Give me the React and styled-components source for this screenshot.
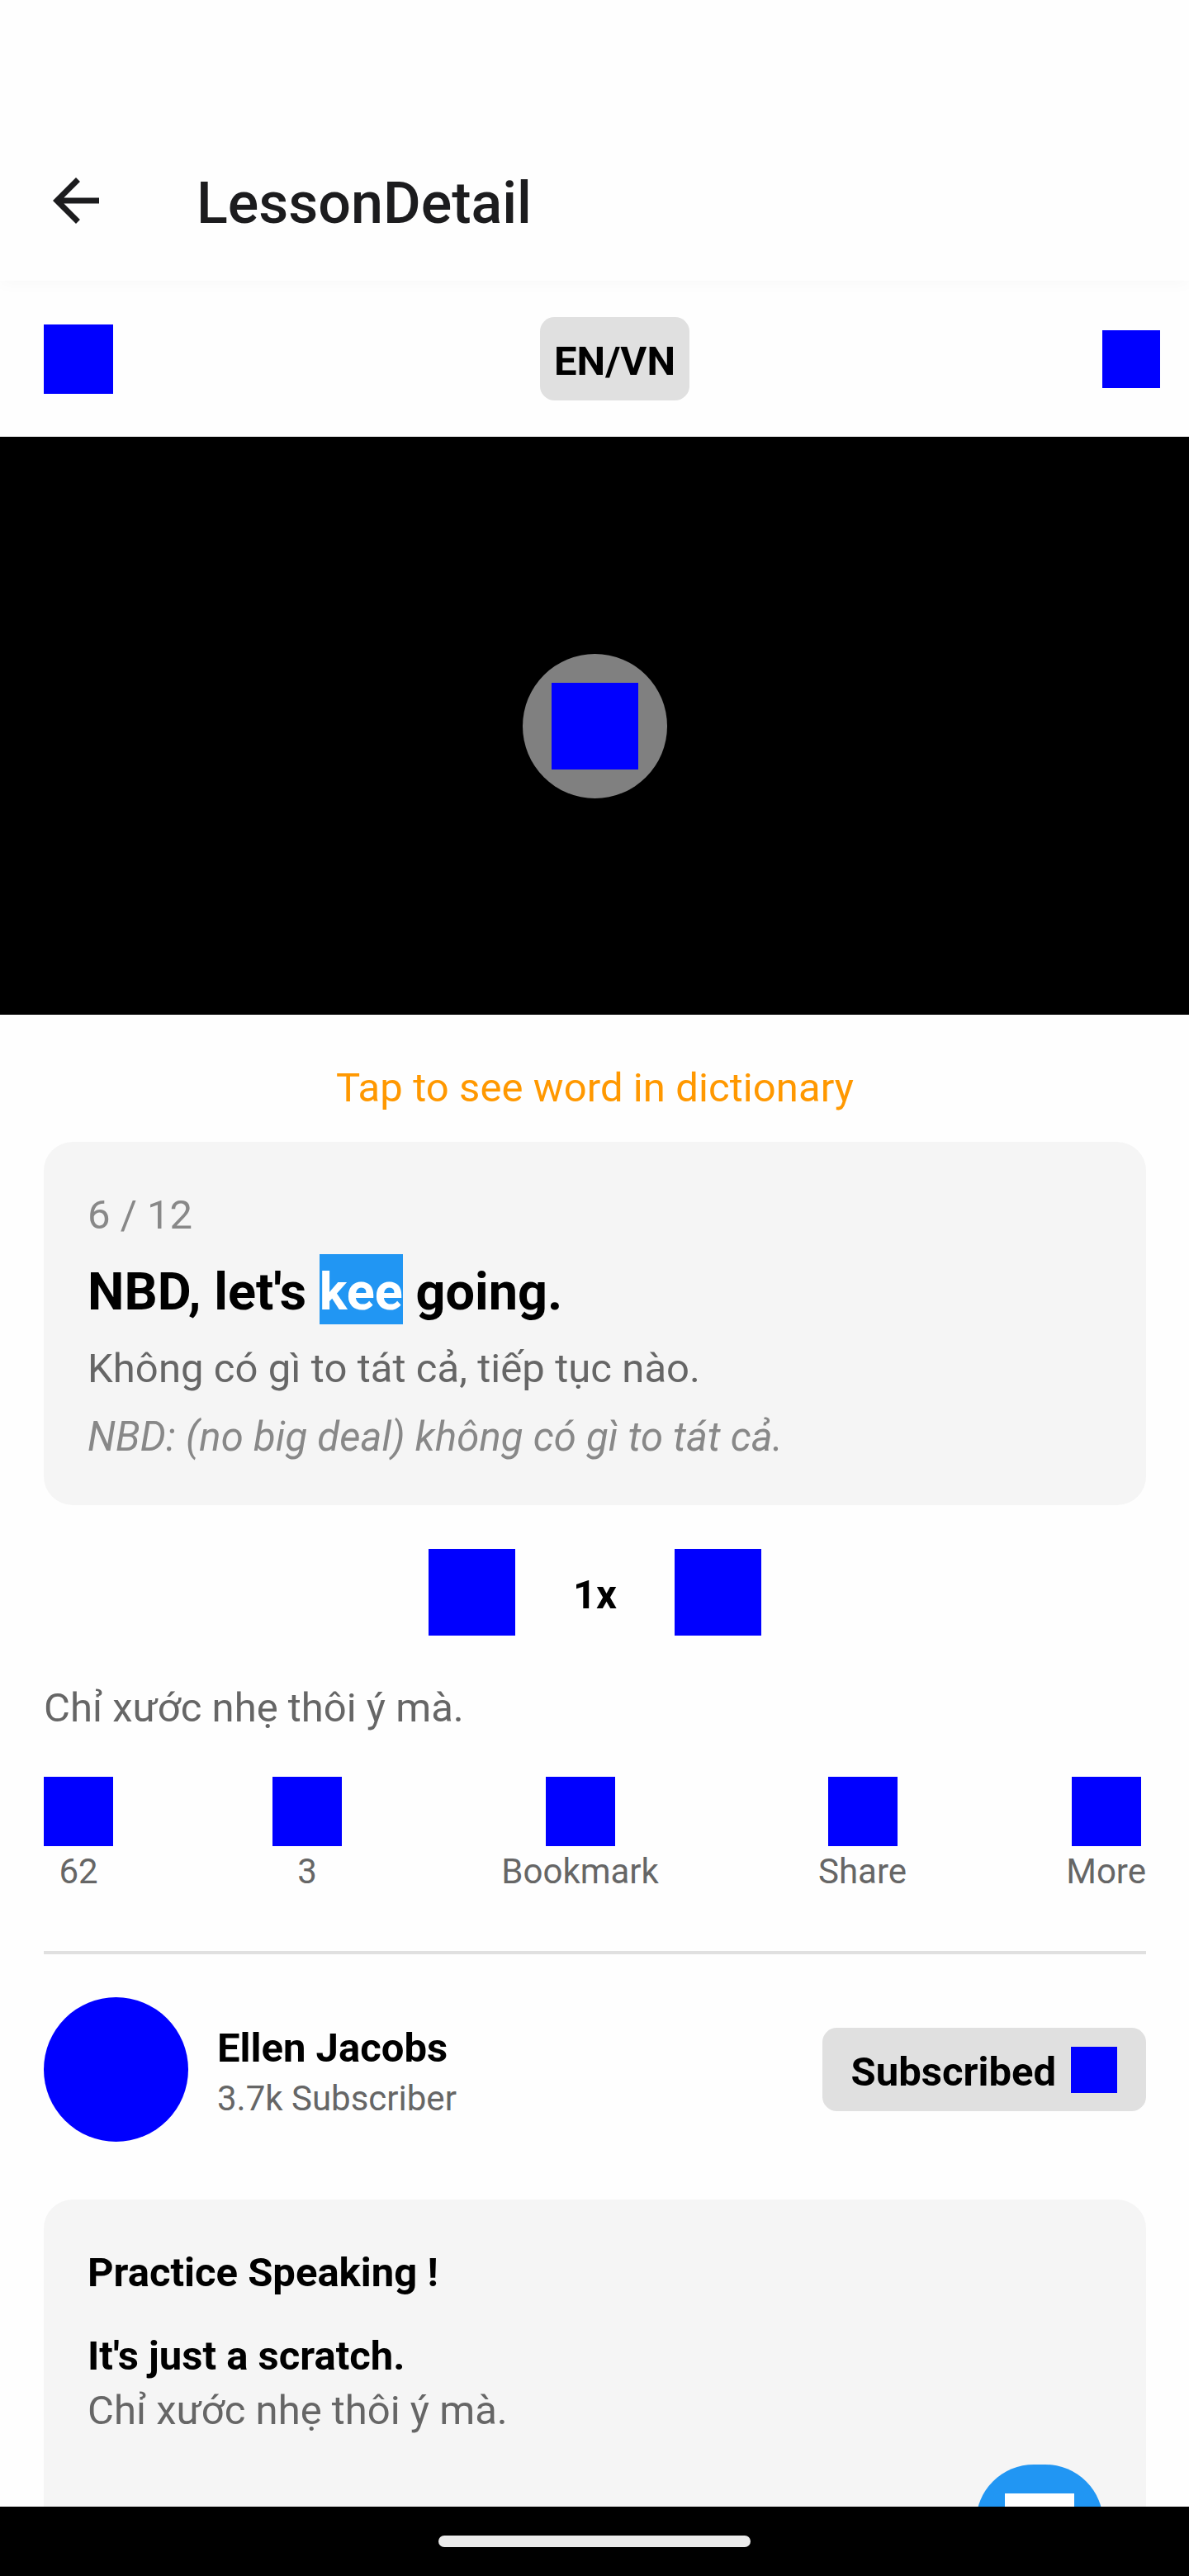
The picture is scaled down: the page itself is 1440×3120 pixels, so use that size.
import React from "react";
import styled, { createGlobalStyle } from "styled-components";

const GlobalStyle = createGlobalStyle`
  *, *::before, *::after { box-sizing: border-box; }
  html, body { margin: 0; padding: 0; }
  body {
    background: #fff;
    font-family: Roboto, "Noto Sans", sans-serif;
    color: #000;
  }
`;

const Screen = styled.div`
  width: 1440px;
  height: 3120px;
  display: flex;
  flex-direction: column;
  overflow: hidden;
  background: #fefefe;
`;

const Header = styled.header`
  flex: none;
  height: 340px;
  padding: 201px 50px 0;
  display: flex;
  align-items: flex-start;
  gap: 104px;
  background: #fefefe;
  box-shadow: 0 5px 18px rgba(0, 0, 0, 0.025);
`;

const BackIcon = styled.svg`
  width: 84px;
  height: 84px;
  fill: #1c1c1e;
`;

const Title = styled.h1`
  margin: 4px 0 0;
  font-size: 70px;
  line-height: 82px;
  font-weight: 500;
  color: #1c1c1e;
`;

const Body = styled.main`
  flex: 1;
  min-height: 0;
  display: flex;
  flex-direction: column;
`;

const Toolbar = styled.div`
  flex: none;
  height: 189px;
  padding: 0 35px 0 53px;
  display: flex;
  align-items: center;
  justify-content: space-between;
`;

const Block = styled.div`
  flex: none;
  width: ${(p) => p.$size}px;
  height: ${(p) => p.$size}px;
  background: ${(p) => p.$color || "#0000ff"};
`;

const ToolbarLead = styled(Block)`
  margin-right: 17px;
`;

const Pill = styled.button`
  height: 101px;
  padding: 5px ${(p) => p.$pad}px 0;
  display: flex;
  align-items: center;
  gap: 18px;
  border: 0;
  border-radius: 17.5px;
  background: #e0e0e0;
  color: #000;
  font: 700 49px/57px Roboto, "Noto Sans", sans-serif;
`;

const PillIcon = styled(Block)`
  margin-top: -4px;
`;

const Video = styled.div`
  flex: none;
  height: 700px;
  display: flex;
  align-items: center;
  justify-content: center;
  background: #000;
`;

const PlayButton = styled.div`
  width: 175px;
  height: 175px;
  border-radius: 50%;
  display: flex;
  align-items: center;
  justify-content: center;
  background: #808080;
`;

const Text = styled.p`
  margin: ${(p) => p.$top || 0}px 0 0;
  font-size: 49px;
  line-height: 57px;
  font-weight: ${(p) => (p.$bold ? 700 : 400)};
  font-style: ${(p) => (p.$italic ? "italic" : "normal")};
  letter-spacing: ${(p) => p.$track || 0}px;
  color: ${(p) => p.$color || "#000"};
`;

const Small = styled.span`
  font-size: 42px;
  line-height: 49px;
  color: #666;
`;

const Hint = styled(Text)`
  text-align: center;
  color: #ff9800;
`;

const Content = styled.div`
  flex: 1;
  min-height: 0;
  overflow: hidden;
  padding: 0 52px 0 53px;
  display: flex;
  flex-direction: column;
`;

const Card = styled.section`
  flex: none;
  margin-top: ${(p) => p.$top}px;
  padding: 60px 52px 54px 53px;
  display: flex;
  flex-direction: column;
  border-radius: 35px;
  background: #f5f5f5;
`;

const Phrase = styled.p`
  margin: 28px 0 0;
  font-size: 63px;
  line-height: 73px;
  font-weight: 700;
`;

const Highlight = styled.span`
  padding: 9px 0 3px;
  background: #2196f3;
  color: #fff;
`;

const SpeedRow = styled.div`
  flex: none;
  margin-top: 53px;
  display: flex;
  align-items: center;
  justify-content: center;
  gap: 70px;
`;

const Actions = styled.div`
  flex: none;
  margin-top: 55px;
  display: flex;
  justify-content: space-between;
`;

const Action = styled.div`
  display: flex;
  flex-direction: column;
  align-items: center;
  gap: 6px;
`;

const Divider = styled.hr`
  flex: none;
  width: 100%;
  height: 4px;
  margin: 72px 0 52px;
  border: 0;
  background: #e0e0e0;
`;

const Channel = styled.div`
  flex: none;
  display: flex;
  align-items: flex-start;
`;

const Avatar = styled(Block)`
  border-radius: 50%;
`;

const ChannelInfo = styled.div`
  flex: 1;
  padding: 33px 0 0 35px;
  display: flex;
  flex-direction: column;
  gap: 8px;
`;

const SubscribeSlot = styled.div`
  margin-top: 37px;
`;

const MicButton = styled.div`
  align-self: flex-end;
  margin-top: 37px;
  padding: 35px;
  border-radius: 70px;
  background: #2196f3;
`;

const NavBar = styled.nav`
  flex: none;
  height: 84px;
  padding-top: 35px;
  display: flex;
  justify-content: center;
  background: #000;
`;

const NavHandle = styled.div`
  width: 378px;
  height: 14px;
  border-radius: 7px;
  background: #ebebeb;
`;

const actions = ["62", "3", "Bookmark", "Share", "More"];

export default function App() {
  return (
    <>
      <GlobalStyle />
      <Screen>
        <Header>
          <BackIcon viewBox="0 0 24 24">
            <path d="M20 11H7.83l5.59-5.59L12 4l-8 8 8 8 1.41-1.41L7.83 13H20v-2z" />
          </BackIcon>
          <Title>LessonDetail</Title>
        </Header>
        <Body>
          <Toolbar>
            <ToolbarLead $size={84} />
            <Pill $pad={17.5}>EN/VN</Pill>
            <Block $size={70} />
          </Toolbar>
          <Video>
            <PlayButton>
              <Block $size={105} />
            </PlayButton>
          </Video>
          <Content>
            <Hint $top={60} $track={0.08}>Tap to see word in dictionary</Hint>
            <Card $top={37}>
              <Text $color="#888">6 / 12</Text>
              <Phrase>
                NBD, let's <Highlight>kee</Highlight> going.
              </Phrase>
              <Text $top={28} $color="#666" $track={0.07}>Không có gì to tát cả, tiếp tục nào.</Text>
              <Text $top={26} $color="#888" $track={0.09} $italic>NBD: (no big deal) không có gì to tát cả.</Text>
            </Card>
            <SpeedRow>
              <Block $size={105} />
              <Text $top={6} $bold>1x</Text>
              <Block $size={105} />
            </SpeedRow>
            <Text $top={59} $color="#666">Chỉ xước nhẹ thôi ý mà.</Text>
            <Actions>
              {actions.map((label) => (
                <Action key={label}>
                  <Block $size={84} />
                  <Small>{label}</Small>
                </Action>
              ))}
            </Actions>
            <Divider />
            <Channel>
              <Avatar $size={175} />
              <ChannelInfo>
                <Text $bold>Ellen Jacobs</Text>
                <Small>3.7k Subscriber</Small>
              </ChannelInfo>
              <SubscribeSlot>
                <Pill $pad={35}>
                  Subscribed
                  <PillIcon $size={56} />
                </Pill>
              </SubscribeSlot>
            </Channel>
            <Card $top={70}>
              <Text $bold>Practice Speaking !</Text>
              <Text $top={44} $bold>It's just a scratch.</Text>
              <Text $top={9} $color="#666">Chỉ xước nhẹ thôi ý mà.</Text>
              <MicButton>
                <Block $size={84} $color="#fff" />
              </MicButton>
            </Card>
          </Content>
        </Body>
        <NavBar>
          <NavHandle />
        </NavBar>
      </Screen>
    </>
  );
}
